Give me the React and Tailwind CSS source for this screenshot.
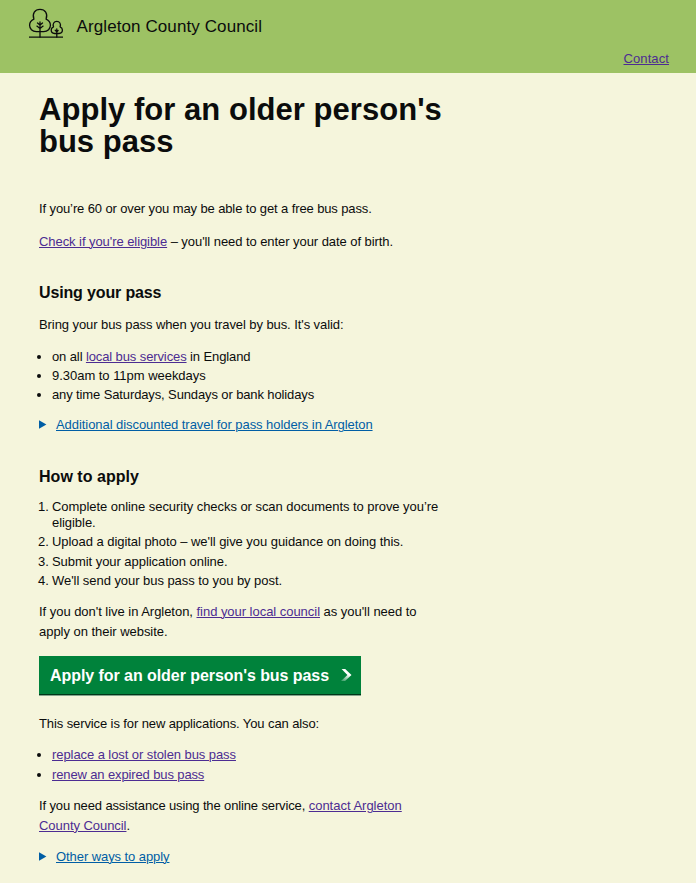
const visited = "text-[#4c2c92] underline decoration-1 underline-offset-[1px]";
const unvisited = "text-[#005ea5] underline decoration-1 underline-offset-[1px]";

function Link({ children, className = "" }) {
  return <a href="#" className={`${visited} ${className}`}>{children}</a>;
}

function TreesLogo() {
  return (
    <svg className="h-[32px] w-[36px] fill-none stroke-[#0b0c0c]" viewBox="28 7 36 32" strokeWidth="1.3" strokeLinecap="round" strokeLinejoin="round">
      <path d="M29 37.2H63" strokeLinecap="butt" />
      <path d="M36.3 31.6C32.2 31.6 29.6 28.6 29.6 25.2C29.6 22.3 31.3 20.2 33.9 19.1C31.9 13.6 34.9 9.4 40 9.4C45.1 9.4 48.1 13.6 46.1 19.1C48.7 20.2 50.4 22.3 50.4 25.2C50.4 28.6 47.8 31.6 43.7 31.6Z" />
      <path d="M40 22V37M37.5 22.9 40 25.1 42.5 22.9M36.9 26.1 40 28.5 43.1 26.1" />
      <path d="M54.6 33.5C52.4 33.5 51.2 31.9 51.2 30.1C51.2 28.4 52.1 27.4 53.5 26.8C52.4 23.8 54 21.4 56.8 21.4C59.6 21.4 61.2 23.8 60.1 26.8C61.5 27.4 62.4 28.4 62.4 30.1C62.4 31.9 61.2 33.5 59 33.5Z" />
      <path d="M56.8 29V37M55.2 30.3 56.8 31.8 58.1 30.5" />
    </svg>
  );
}

function Triangle() {
  return (
    <svg className="mr-[9px] mb-px h-[9px] w-2 shrink-0 fill-[#005ea5]" viewBox="0 0 8 9">
      <path d="M0 0.3 7.4 4.5 0 8.7Z" />
    </svg>
  );
}

function Chevron() {
  return (
    <svg className="mb-[2px] h-[12px] w-[11px]" viewBox="0 0 11 12">
      <defs>
        <linearGradient id="fade" x1="0.7" y1="0" x2="0.3" y2="1">
          <stop offset="0.4" stopColor="#fff" />
          <stop offset="1" stopColor="#fff" stopOpacity="0.3" />
        </linearGradient>
      </defs>
      <path d="M0.6 0H4.2L10.5 6L4 12H0L6.4 6Z" fill="url(#fade)" />
    </svg>
  );
}

function Bullet() {
  return <span className="mr-[11px] -ml-[2px] size-1 shrink-0 rounded-full bg-[#0b0c0c]" />;
}

function Step({ n, className = "", children }) {
  return (
    <li className={`flex ${className}`}>
      <span className="-ml-px w-[14px] shrink-0">{n}.</span>
      <div>{children}</div>
    </li>
  );
}

export default function App() {
  return (
    <div className="h-[883px] w-[696px] overflow-hidden bg-[#f5f5dc] font-['Liberation_Sans',sans-serif] text-[13px] leading-[20px] whitespace-nowrap text-[#0b0c0c]">
      <header className="h-[73px] bg-[#9dc264]">
        <div className="flex h-[53px] items-center pl-7 text-[17px] tracking-[0.1px]">
          <div className="-mt-[7px] mr-[12.5px]"><TreesLogo /></div>
          Argleton County Council
        </div>
        <div className="-mt-1 pr-[27px] text-right"><Link className="tracking-[0.1px]">Contact</Link></div>
      </header>
      <main className="pl-[39px]">
        <h1 className="pt-[21px] text-[31px] leading-8 font-bold">
          <span className="tracking-[0.04px]">Apply for an older person's</span><br />bus pass
        </h1>
        <p className="mt-[41px] tracking-[-0.115px]">If you’re 60 or over you may be able to get a free bus pass.</p>
        <p className="mt-[13px] tracking-[-0.065px]"><Link>Check if you're eligible</Link> – you'll need to enter your date of birth.</p>
        <h2 className="mt-[31px] text-[16px] font-bold tracking-[-0.14px]">Using your pass</h2>
        <p className="mt-3 tracking-[-0.08px]">Bring your bus pass when you travel by bus. It's valid:</p>
        <ul className="mt-3 leading-[19px]">
          <li className="flex items-center tracking-[-0.11px]"><Bullet /><p>on all <Link>local bus services</Link> in England</p></li>
          <li className="flex items-center tracking-[-0.03px]"><Bullet />9.30am to 11pm weekdays</li>
          <li className="flex items-center tracking-[-0.12px]"><Bullet />any time Saturdays, Sundays or bank holidays</li>
        </ul>
        <div className="mt-[11px] flex items-center tracking-[-0.063px]"><Triangle /><span className={unvisited}>Additional discounted travel for pass holders in Argleton</span></div>
        <h2 className="mt-[32px] text-[16px] font-bold tracking-[0.03px]">How to apply</h2>
        <ol className="mt-3 leading-4 tracking-[-0.05px]">
          <Step n={1}>Complete online security checks or scan documents to prove you’re<br />eligible.</Step>
          <Step n={2} className="mt-[3px]">Upload a digital photo – we'll give you guidance on doing this.</Step>
          <Step n={3} className="mt-1">Submit your application online.</Step>
          <Step n={4} className="mt-[3px]">We'll send your bus pass to you by post.</Step>
        </ol>
        <p className="mt-[13px] tracking-[-0.035px]">If you don't live in Argleton, <Link>find your local council</Link> as you'll need to<br />apply on their website.</p>
        <a href="#" className="mt-[14px] flex h-[40px] w-[322px] items-center justify-between bg-[linear-gradient(#00823b_0_38px,#003618_38px_39px,#84a48c_39px)] pr-[9px] pb-[1px] pl-[11px] text-[16px] font-bold tracking-[-0.06px] text-white">
          Apply for an older person's bus pass<Chevron />
        </a>
        <p className="mt-[18px] tracking-[-0.105px]">This service is for new applications. You can also:</p>
        <ul className="mt-[11px]">
          <li className="flex items-center tracking-[-0.075px]"><Bullet /><Link>replace a lost or stolen bus pass</Link></li>
          <li className="flex items-center tracking-[-0.125px]"><Bullet /><Link>renew an expired bus pass</Link></li>
        </ul>
        <p className="mt-[11px]">
          <span className="tracking-[-0.13px]">If you need assistance using the online service, </span>
          <Link className="tracking-[-0.01px]">contact Argleton</Link><br />
          <Link className="tracking-[-0.05px]">County Council</Link>.
        </p>
        <div className="mt-[11px] flex items-center tracking-[-0.075px]"><Triangle /><span className={unvisited}>Other ways to apply</span></div>
      </main>
    </div>
  );
}
